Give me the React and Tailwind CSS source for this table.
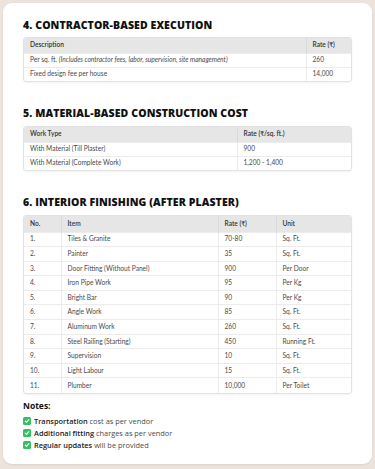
import React from "react";

const interior = [
  ["1.", "Tiles & Granite", "70-80", "Sq. Ft."],
  ["2.", "Painter", "35", "Sq. Ft."],
  ["3.", "Door Fitting (Without Panel)", "900", "Per Door"],
  ["4.", "Iron Pipe Work", "95", "Per Kg"],
  ["5.", "Bright Bar", "90", "Per Kg"],
  ["6.", "Angle Work", "85", "Sq. Ft."],
  ["7.", "Aluminum Work", "260", "Sq. Ft."],
  ["8.", "Steel Railing (Starting)", "450", "Running Ft."],
  ["9.", "Supervision", "10", "Sq. Ft."],
  ["10.", "Light Labour", "15", "Sq. Ft."],
  ["11.", "Plumber", "10,000", "Per Toilet"],
];

const notes = [
  ["Transportation", "cost as per vendor"],
  ["Additional fitting", "charges as per vendor"],
  ["Regular updates", "will be provided"],
];

function Heading({ children, className = "" }) {
  return (
    <h2 className={`font-['Open_Sans',sans-serif] text-[10.5px] leading-[14px] font-extrabold text-[#111] tracking-[0.1px] ${className}`}>
      {children}
    </h2>
  );
}

const th = "text-left font-semibold text-[#333] bg-[#e6e6e6] px-[6px] h-[15px] border-r border-[#dadada] last:border-r-0";
const td = "text-left text-[#4a4a4a] px-[6px] border-t border-r border-[#ececec] last:border-r-0";

function Check() {
  return (
    <span className="w-[8px] h-[8px] rounded-[1.5px] bg-[#33c162] flex items-center justify-center shrink-0">
      <svg width="6" height="6" viewBox="0 0 10 10" fill="none">
        <path d="M2 5.2 L4.2 7.3 L8 2.8" stroke="white" strokeWidth="1.8" strokeLinecap="round" strokeLinejoin="round" />
      </svg>
    </span>
  );
}

export default function App() {
  return (
    <div className="w-[375px] h-[469px] bg-[#ece4dc] p-[3px] font-['Lato','Open_Sans',sans-serif]">
      <div className="bg-white rounded-[9px] h-[461px] px-[20px] pt-[15px] shadow-[0_1px_2px_rgba(0,0,0,0.08)]">
        <Heading>4. CONTRACTOR-BASED EXECUTION</Heading>
        <div className="mt-[5px] rounded-[3px] overflow-hidden border border-[#e2e2e2] shadow-[0_1px_2px_rgba(0,0,0,0.05)]">
          <table className="w-full table-fixed border-collapse text-[6.6px]">
            <colgroup>
              <col className="w-[282px]" />
              <col />
            </colgroup>
            <thead>
              <tr>
                <th className={th}>Description</th>
                <th className={th}>Rate (₹)</th>
              </tr>
            </thead>
            <tbody>
              <tr className="h-[14px]">
                <td className={td}>
                  Per sq. ft. <i>(Includes contractor fees, labor, supervision, site management)</i>
                </td>
                <td className={td}>260</td>
              </tr>
              <tr className="h-[14px]">
                <td className={td}>Fixed design fee per house</td>
                <td className={td}>14,000</td>
              </tr>
            </tbody>
          </table>
        </div>

        <Heading className="mt-[24px]">5. MATERIAL-BASED CONSTRUCTION COST</Heading>
        <div className="mt-[6px] rounded-[3px] overflow-hidden border border-[#e2e2e2] shadow-[0_1px_2px_rgba(0,0,0,0.05)]">
          <table className="w-full table-fixed border-collapse text-[6.6px]">
            <colgroup>
              <col className="w-[213px]" />
              <col />
            </colgroup>
            <thead>
              <tr>
                <th className={th}>Work Type</th>
                <th className={th}>Rate (₹/sq. ft.)</th>
              </tr>
            </thead>
            <tbody>
              <tr className="h-[14px]">
                <td className={td}>With Material (Till Plaster)</td>
                <td className={td}>900</td>
              </tr>
              <tr className="h-[14px]">
                <td className={td}>With Material (Complete Work)</td>
                <td className={td}>1,200 - 1,400</td>
              </tr>
            </tbody>
          </table>
        </div>

        <Heading className="mt-[24px]">6. INTERIOR FINISHING (AFTER PLASTER)</Heading>
        <div className="mt-[6px] rounded-[3px] overflow-hidden border border-[#e2e2e2] shadow-[0_1px_2px_rgba(0,0,0,0.05)]">
          <table className="w-full table-fixed border-collapse text-[6.6px]">
            <colgroup>
              <col className="w-[37px]" />
              <col className="w-[157px]" />
              <col className="w-[58px]" />
              <col />
            </colgroup>
            <thead>
              <tr>
                <th className={`${th} h-[16px]`}>No.</th>
                <th className={`${th} h-[16px]`}>Item</th>
                <th className={`${th} h-[16px]`}>Rate (₹)</th>
                <th className={`${th} h-[16px]`}>Unit</th>
              </tr>
            </thead>
            <tbody>
              {interior.map((r) => (
                <tr key={r[0]} className="h-[14.6px]">
                  {r.map((c, i) => (
                    <td key={i} className={td}>{c}</td>
                  ))}
                </tr>
              ))}
            </tbody>
          </table>
        </div>

        <h3 className="mt-[6px] font-['Open_Sans',sans-serif] text-[8.5px] leading-[12px] font-bold text-[#111]">Notes:</h3>
        <ul className="mt-[5px] flex flex-col gap-[3px] font-['Open_Sans',sans-serif]">
          {notes.map(([b, rest]) => (
            <li key={b} className="flex items-center gap-[3px] text-[7.4px] leading-[9px] text-[#4a4a4a]">
              <Check />
              <span>
                <b className="font-semibold text-[#222]">{b}</b> {rest}
              </span>
            </li>
          ))}
        </ul>
      </div>
    </div>
  );
}
